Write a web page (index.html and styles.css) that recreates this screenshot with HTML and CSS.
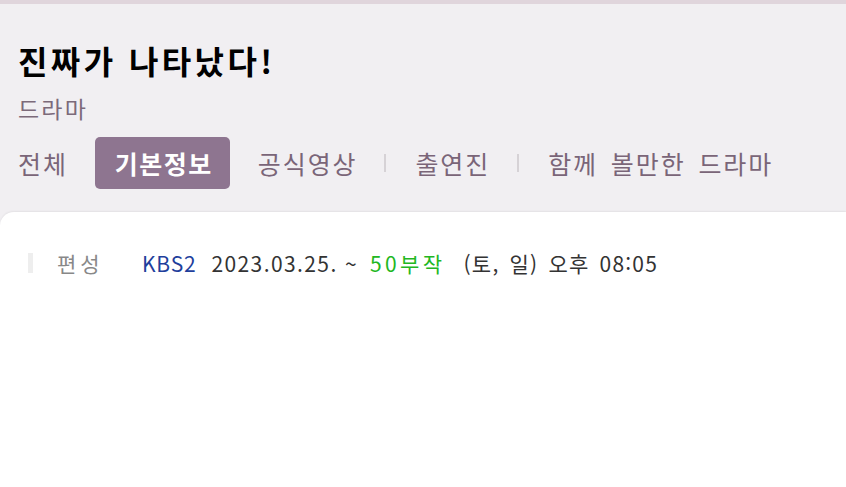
FILE: index.html
```html
<!DOCTYPE html>
<html lang="ko">
<head>
<meta charset="utf-8">
<link rel="stylesheet" href="styles.css">
</head>
<body>
<div class="page">
  <header class="head">
    <h1 class="title">진짜가 나타났다!</h1>
    <div class="genre">드라마</div>
    <nav class="tabs">
      <span class="tab">전체</span>
      <span class="tab active">기본정보</span>
      <span class="tab">공식영상</span>
      <span class="sep"></span>
      <span class="tab">출연진</span>
      <span class="sep"></span>
      <span class="tab">함께 볼만한 드라마</span>
    </nav>
  </header>
  <main class="card">
    <div class="info-row">
      <span class="bar"></span>
      <span class="label">편성</span>
      <span class="val">
        <span class="ch">KBS2</span>
        <span class="date">2023.03.25. ~</span>
        <span class="ep">50부작</span>
        <span class="time">(토, 일) 오후 08:05</span>
      </span>
    </div>
  </main>
</div>
</body>
</html>
```
FILE: styles.css
```css
html, body {
  margin: 0;
  padding: 0;
  height: 100%;
}
body {
  font-family: "Noto Sans CJK KR", "Noto Sans", sans-serif;
  background: #f1eff2;
  overflow: hidden;
}
.page {
  border-top: 4px solid #e0d5dc;
  min-height: 100%;
  box-sizing: border-box;
  display: flex;
  flex-direction: column;
}
.head {
  padding: 36px 18px 0 18px;
}
.title {
  margin: 0;
  font-size: 32px;
  line-height: 40px;
  font-weight: 700;
  color: #000;
  letter-spacing: 3.4px;
}
.genre {
  margin-top: 14px;
  font-size: 23px;
  line-height: 28px;
  color: #7c6a7a;
  letter-spacing: 2.2px;
}
.tabs {
  margin-top: 15px;
  display: flex;
  align-items: center;
  height: 52px;
}
.tab {
  font-size: 25px;
  line-height: 52px;
  color: #7a6578;
  letter-spacing: 1.9px;
  margin-right: 27px;
  white-space: pre;
  word-spacing: 4px;
}
.tab.active {
  background: #8e7590;
  color: #fff;
  font-weight: 700;
  border-radius: 5px;
  padding: 0 17px 0 20px;
  height: 52px;
  letter-spacing: 1.5px;
  margin-right: 28px;
}
.sep {
  width: 2px;
  height: 18px;
  background: #d6d2d6;
  margin-right: 29px;
}
.card {
  flex: 1;
  margin-top: 23px;
  background: #fff;
  border-top-left-radius: 14px;
  box-shadow: 0 -1px 2px rgba(0,0,0,0.06);
  padding: 37px 0 0 28px;
}
.info-row {
  display: flex;
  align-items: center;
  font-size: 21px;
  line-height: 28px;
}
.bar {
  width: 5px;
  height: 20px;
  background: #eeeeee;
  margin-right: 24px;
}
.label {
  color: #888;
  width: 85px;
  letter-spacing: 4px;
}
.val {
  display: flex;
  white-space: pre;
}
.ch { color: #1f3f9c; margin-right: 15px; letter-spacing: 0.8px; }
.date { color: #333; margin-right: 12px; letter-spacing: 1.4px; }
.ep { color: #22b722; margin-right: 18px; letter-spacing: 3.4px; }
.time { color: #333; letter-spacing: 1.2px; word-spacing: 3px; }
```
